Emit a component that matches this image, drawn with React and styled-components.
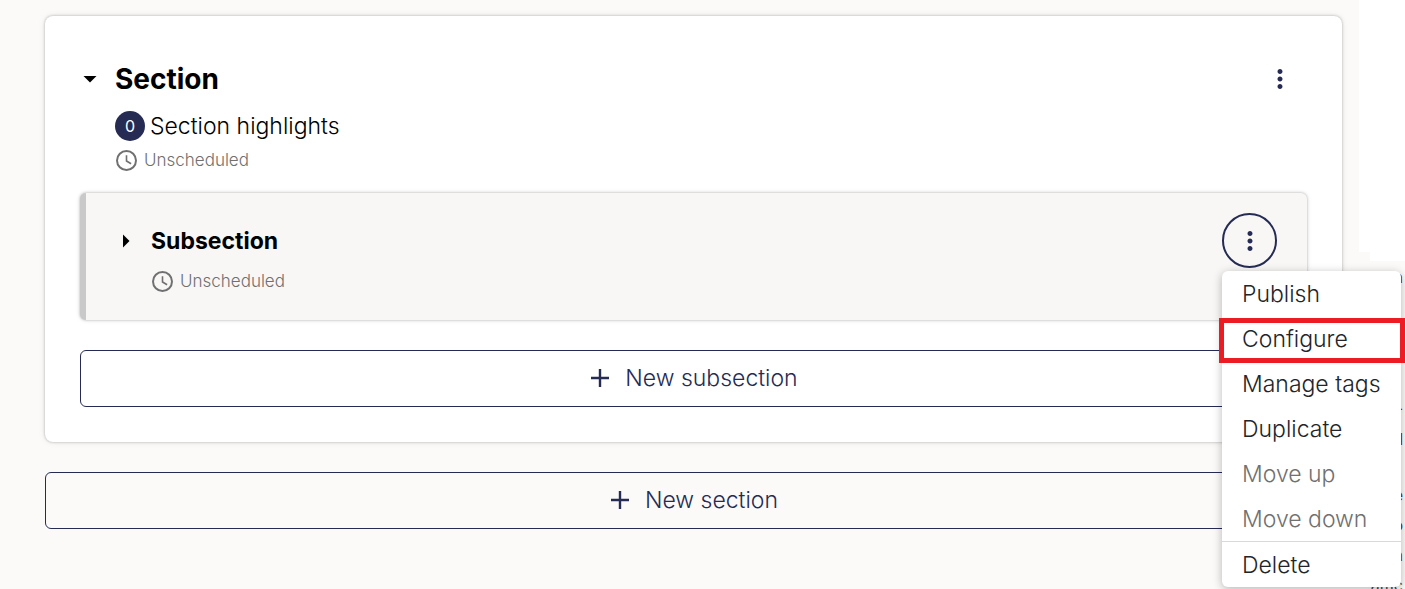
import React from "react";
import styled, { createGlobalStyle, css } from "styled-components";

const navy = "#262b54";
const grey = "#707070";

const GlobalStyle = createGlobalStyle`
  * {
    box-sizing: border-box;
  }

  body {
    margin: 0;
    min-height: 100vh;
    background: #fbfaf9;
    color: #000;
    font-family: Inter, "Liberation Sans", sans-serif;
    font-size: 23px;
    font-weight: 340;
    line-height: 30px;
    overflow: hidden;
  }

  button {
    font: inherit;
    cursor: pointer;
  }
`;

const Page = styled.div`
  display: flex;
  height: 100vh;
  overflow: hidden;
`;

const Outline = styled.main`
  flex: 1;
  display: flex;
  flex-direction: column;
  gap: 30px;
  min-width: 0;
  padding: 16px 17px 0 45px;
`;

const SectionCard = styled.section`
  padding: 35px;
  border-radius: 8px;
  background: #fff;
  box-shadow: 0 0 3px rgba(0, 0, 0, 0.3), 0 0 8px rgba(0, 0, 0, 0.06);
`;

const CardHeader = styled.header`
  display: flex;
  align-items: center;
  height: 55px;
`;

const ToggleButton = styled.button`
  display: flex;
  align-items: center;
  padding: 0;
  border: 0;
  background: none;
  color: #000;
`;

const CaretBox = styled.span`
  display: flex;
  justify-content: center;
  width: 20px;
  margin-right: 15px;
`;

const Title = styled.h2`
  margin: 0;
  font-size: ${(p) => (p.$small ? 23 : 28)}px;
  font-weight: 680;
  line-height: 36px;
`;

const MenuAnchor = styled.div`
  position: relative;
  margin-left: auto;
`;

const IconButton = styled.button`
  display: flex;
  align-items: center;
  justify-content: center;
  width: 55px;
  height: 55px;
  padding: 0;
  border: 2px solid ${(p) => (p.$active ? navy : "transparent")};
  border-radius: 50%;
  background: none;
  color: ${navy};
`;

const SectionMeta = styled.div`
  display: flex;
  flex-direction: column;
  gap: 6px;
  padding: 5px 0 20px 35px;
`;

const Highlights = styled.button`
  display: flex;
  align-items: center;
  gap: 5px;
  padding: 0;
  border: 0;
  background: none;
  color: #000;
`;

const Count = styled.span`
  width: 30px;
  height: 30px;
  border-radius: 50%;
  background: ${navy};
  color: #fff;
  font-size: 16px;
  font-weight: 400;
  text-align: center;
`;

const Status = styled.div`
  display: flex;
  align-items: center;
  gap: 5px;
  height: 26px;
  color: ${grey};
  font-size: 17px;
`;

const SubsectionCard = styled.section`
  padding: 20px 30px 26px 30px;
  border-left: 6px solid #c9c9c9;
  border-radius: 6px;
  background: #f8f7f6;
  box-shadow: 0 0 3px rgba(0, 0, 0, 0.3), 0 0 6px rgba(0, 0, 0, 0.06);
`;

const SubsectionMeta = styled.div`
  padding-left: 35px;
`;

const AddButton = styled.button`
  display: flex;
  align-items: center;
  justify-content: center;
  gap: 10px;
  width: 100%;
  height: 57px;
  margin-top: ${(p) => (p.$inside ? 30 : 0)}px;
  padding: 0 4px 2px 0;
  border: 1px solid ${navy};
  border-radius: 6px;
  background: transparent;
  color: ${navy};
`;

const Menu = styled.div`
  position: absolute;
  top: 58px;
  left: 0;
  z-index: 2;
  width: 179px;
  border-radius: 6px;
  background: #fff;
  box-shadow: 0 2px 10px rgba(0, 0, 0, 0.28);
`;

const MenuItem = styled.button`
  position: relative;
  display: block;
  width: 100%;
  height: 45px;
  padding: 0 20px;
  border: 0;
  background: none;
  color: #212529;
  text-align: left;
  white-space: nowrap;

  &:disabled {
    color: ${grey};
  }

  ${(p) =>
    p.$marked &&
    css`
      &::after {
        content: "";
        position: absolute;
        inset: 2px -4px -2px -3px;
        border: 5px solid #ed1c24;
      }
    `}
`;

const MenuDivider = styled.hr`
  height: 1px;
  margin: 0;
  border: 0;
  background: #d9d9d9;
`;

const Sidebar = styled.aside`
  width: 46px;
`;

const SidebarTop = styled.div`
  height: 252px;
  background: #fff;
`;

const SidebarStep = styled.div`
  height: 9px;
  margin-left: 11px;
  background: #fff;
`;

const SidebarText = styled.div`
  display: flex;
  flex-direction: column;
  padding: 1px 2px 0 0;
  color: #454545;
  font-size: 16px;
  font-weight: 400;
  line-height: 30px;
  text-align: right;
`;

const Line = styled.span`
  flex: none;
  height: ${(p) => p.$height || 30}px;
`;

const Caret = ({ right }) => (
  <svg width="14" height="14" viewBox="0 0 14 14" fill="currentColor" aria-hidden="true">
    <path d={right ? "M4 0.5 10.5 7 4 13.5z" : "M0.5 4h13L7 10.5z"} />
  </svg>
);

const Dots = () => (
  <svg width="30" height="30" viewBox="0 0 24 24" fill="currentColor" aria-hidden="true">
    <path d="M12 8c1.100 0 2-.9 2-2s-.9-2-2-2-2 .9-2 2 .9 2 2 2zm0 2c-1.100 0-2 .9-2 2s.9 2 2 2 2-.9 2-2-.9-2-2-2zm0 6c-1.100 0-2 .9-2 2s.9 2 2 2 2-.9 2-2-.9-2-2-2z" />
  </svg>
);

const Clock = () => (
  <svg width="24" height="24" viewBox="0 0 24 24" fill="none" stroke="currentColor" aria-hidden="true">
    <circle cx="11.500" cy="12.500" r="9.500" strokeWidth="2" />
    <path d="M11.500 7.200v5.800l4.600 2.800" strokeWidth="1.600" />
  </svg>
);

const Plus = () => (
  <svg width="30" height="30" viewBox="0 0 30 30" fill="none" stroke="currentColor" aria-hidden="true">
    <path d="M15 6v18M6 15h18" strokeWidth="2.400" />
  </svg>
);

const menuItems = [
  { label: "Publish" },
  { label: "Configure", marked: true },
  { label: "Manage tags" },
  { label: "Duplicate" },
  { label: "Move up", disabled: true },
  { label: "Move down", disabled: true },
];

const App = () => {
  return (
    <>
      <GlobalStyle />
      <Page>
        <Outline>
          <SectionCard>
            <CardHeader>
              <ToggleButton aria-expanded="true">
                <CaretBox>
                  <Caret />
                </CaretBox>
                <Title>Section</Title>
              </ToggleButton>
              <MenuAnchor>
                <IconButton aria-label="Section actions">
                  <Dots />
                </IconButton>
              </MenuAnchor>
            </CardHeader>
            <SectionMeta>
              <Highlights>
                <Count>0</Count>
                Section highlights
              </Highlights>
              <Status>
                <Clock />
                Unscheduled
              </Status>
            </SectionMeta>
            <SubsectionCard>
              <CardHeader>
                <ToggleButton aria-expanded="false">
                  <CaretBox>
                    <Caret right />
                  </CaretBox>
                  <Title as="h3" $small>
                    Subsection
                  </Title>
                </ToggleButton>
                <MenuAnchor>
                  <IconButton $active aria-label="Subsection actions">
                    <Dots />
                  </IconButton>
                  <Menu>
                    {menuItems.map((item) => (
                      <MenuItem key={item.label} disabled={item.disabled} $marked={item.marked}>
                        {item.label}
                      </MenuItem>
                    ))}
                    <MenuDivider />
                    <MenuItem>Delete</MenuItem>
                  </Menu>
                </MenuAnchor>
              </CardHeader>
              <SubsectionMeta>
                <Status>
                  <Clock />
                  Unscheduled
                </Status>
              </SubsectionMeta>
            </SubsectionCard>
            <AddButton $inside>
              <Plus />
              New subsection
            </AddButton>
          </SectionCard>
          <AddButton>
            <Plus />
            New section
          </AddButton>
        </Outline>
        <Sidebar>
          <SidebarTop />
          <SidebarStep />
          <SidebarText>
            <Line $height={54}>a</Line>
            <Line $height={77}>e</Line>
            <Line $height={31}>-</Line>
            <Line $height={56}>l</Line>
            <Line>e</Line>
            <Line>o</Line>
            <Line>n</Line>
            <Line>amc</Line>
          </SidebarText>
        </Sidebar>
      </Page>
    </>
  );
};

export default App;
